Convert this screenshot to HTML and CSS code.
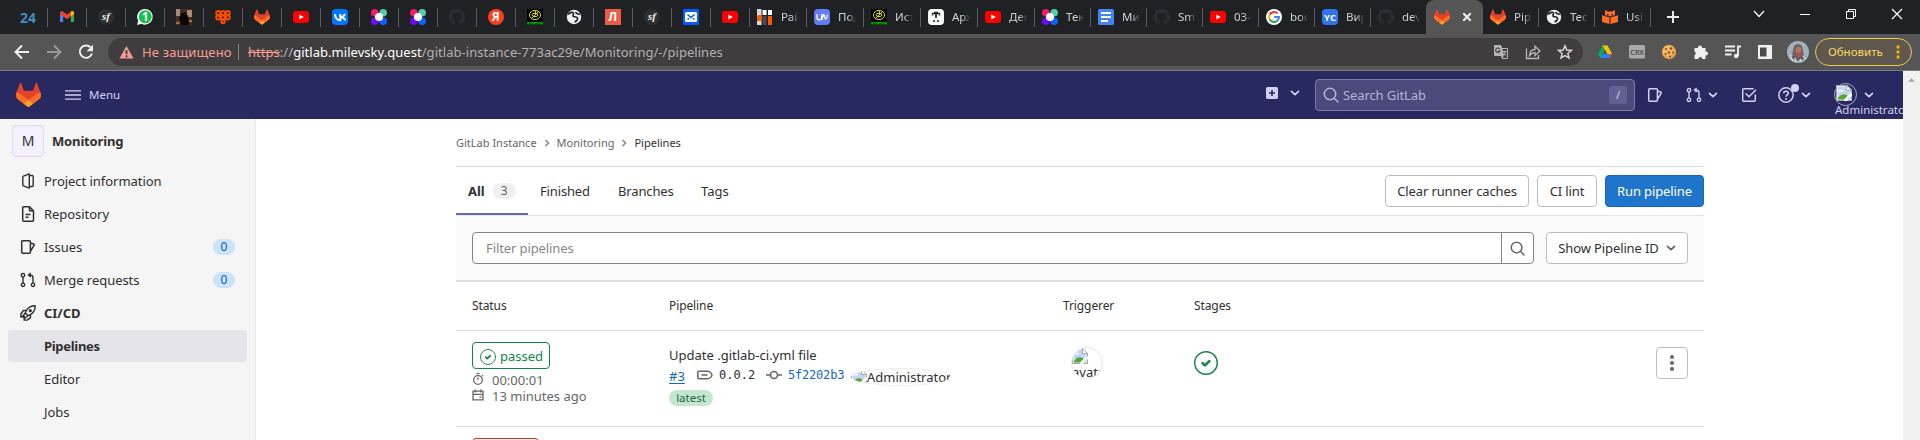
FILE: index.html
```html
<!DOCTYPE html>
<html lang="en">
<head>
<meta charset="utf-8">
<title>Pipelines · Monitoring · GitLab</title>
<link rel="stylesheet" href="styles.css">
</head>
<body>
<svg class="defs" width="0" height="0">
  <symbol id="fox" viewBox="0 0 25 24"><path fill="#e24329" d="m24.507 9.5-.034-.09L21.082.562a.896.896 0 0 0-1.694.091l-2.29 7.01H7.825L5.535.653a.898.898 0 0 0-1.694-.09L.451 9.411.416 9.5a6.297 6.297 0 0 0 2.09 7.278l5.202 3.899 4.114 3.111a1.051 1.051 0 0 0 1.268 0l4.115-3.111 5.211-3.9A6.297 6.297 0 0 0 24.507 9.5Z"/><path fill="#fc6d26" d="m24.507 9.5-.034-.09a11.44 11.44 0 0 0-4.56 2.051l-7.447 5.632 4.742 3.584 5.211-3.9A6.297 6.297 0 0 0 24.507 9.5ZM5.01 11.461a11.43 11.43 0 0 0-4.56-2.05L.416 9.5a6.297 6.297 0 0 0 2.09 7.278l5.202 3.899 4.745-3.584Z"/><path fill="#fca326" d="m7.707 20.677 4.115 3.111a1.051 1.051 0 0 0 1.268 0l4.115-3.111-4.743-3.584Z"/></symbol>
  <symbol id="yt" viewBox="0 0 16 16"><rect y="2" width="16" height="12" rx="3" fill="#f00"/><path d="M6.3 5.4v5.2L10.8 8z" fill="#fff"/></symbol>
  <symbol id="dots" viewBox="0 0 16 16"><circle cx="3.8" cy="3.8" r="3.8" fill="#ef1e6b"/><circle cx="12.2" cy="3.8" r="3.8" fill="#4cd0a4"/><circle cx="3.8" cy="12.2" r="3.8" fill="#6a0cf5"/><circle cx="12.2" cy="12.2" r="3.8" fill="#0a63ff"/><circle cx="8" cy="8" r="4" fill="#fff"/></symbol>
  <symbol id="github" viewBox="0 0 16 16"><path fill="#292f33" d="M8 0C3.58 0 0 3.58 0 8c0 3.54 2.29 6.53 5.47 7.59.4.07.55-.17.55-.38v-1.49c-2.01.37-2.53-.49-2.69-.94-.09-.23-.48-.94-.82-1.13-.28-.15-.68-.52-.01-.53.63-.01 1.08.58 1.23.82.72 1.21 1.87.87 2.33.66.07-.52.28-.87.51-1.07-1.78-.2-3.64-.89-3.64-3.95 0-.87.31-1.59.82-2.15-.08-.2-.36-1.02.08-2.12 0 0 .67-.21 2.2.82a7.6 7.6 0 0 1 4 0c1.53-1.04 2.2-.82 2.2-.82.44 1.1.16 1.92.08 2.12.51.56.82 1.27.82 2.15 0 3.07-1.87 3.75-3.65 3.95.29.25.54.73.54 1.48v2.2c0 .21.15.46.55.38A8.01 8.01 0 0 0 8 0Z"/></symbol>
  <symbol id="sf" viewBox="0 0 16 16" overflow="visible"><circle cx="8" cy="8" r="8" fill="#2f2f31"/><text x="8" y="11.2" text-anchor="middle" font-family="Liberation Serif, serif" font-style="italic" font-weight="bold" font-size="11" fill="#eee">sf</text></symbol>
  <symbol id="globe" viewBox="0 0 16 16"><circle cx="8" cy="8" r="7.2" fill="#f1f1f1"/><path d="M2 5.500c2.500-2.500 5-2.800 5.500-1.300.3 1.300-1 1.600-.5 2.800.6 1.100 3.500.3 4.500 2 .7 1.500-1.500 3.500-3 4M9.500 3.200c.8 1.600 2 2 4.500 2" fill="none" stroke="#202124" stroke-width="1.600"/></symbol>
  <symbol id="atom" viewBox="0 0 16 16"><path d="M0 0h16v16H0z" fill="#000"/><g fill="none" stroke="#d9dc1a"><ellipse cx="8" cy="6" rx="5.5" ry="4.6"/><ellipse cx="8" cy="6" rx="3" ry="1.6"/><path d="m4 10 8-8M8 1.500l1 4"/></g><path d="M0 13h16v2.600H0z" fill="#009a00"/><path d="M2 15h3m3 0h5" stroke="#003a00"/></symbol>
  <symbol id="chev" viewBox="0 0 10 10"><path d="M1.500 3.300 5 6.700l3.500-3.400" fill="none" stroke="currentColor" stroke-width="1.700" stroke-linecap="round" stroke-linejoin="round"/></symbol>
  <symbol id="issues" viewBox="0 0 16 16"><path d="M2.600 1.750h6.800a1 1 0 0 1 1 1v10.500a1 1 0 0 1-1 1H2.600a.9.900 0 0 1-.9-.9V2.600a.9.900 0 0 1 .9-.850ZM10.400 4l3.300 1a.8.800 0 0 1 .5 1.100l-3.800 6.300" fill="none" stroke="currentColor" stroke-width="1.500" stroke-linejoin="round"/></symbol>
  <symbol id="merge" viewBox="0 0 16 16"><g fill="none" stroke="currentColor" stroke-width="1.400"><circle cx="3" cy="3.200" r="1.700"/><circle cx="3" cy="12.800" r="1.700"/><circle cx="13" cy="12.800" r="1.700"/><path d="M3 5v6M13 11V6a3 3 0 0 0-3-3H8.500M10.700.900 8.500 3l2.200 2.100" /></g></symbol>
  <symbol id="search" viewBox="0 0 16 16"><path d="M11.300 11.300 15 15M12.700 7A5.700 5.700 0 1 1 1.300 7a5.700 5.700 0 0 1 11.400 0Z" fill="none" stroke="currentColor" stroke-width="1.600" stroke-linecap="round"/></symbol>
  <symbol id="broken" viewBox="0 0 16 16"><path d="M0 0h11l5 5v11H0z" fill="#fff"/><path d="M1.500 1.500h9V6H14.500v8.500h-13z" fill="#c3d5f7"/><path d="M2 6.500c0-1.500 2-1.600 2.300-.9C5 4 7.500 4.800 7.200 6.500z" fill="#fff"/><path d="M1.500 14.500c1-3.500 4-5.300 6.500-5.300 2 0 3.500 1 4.200 2.300l-4 3z" fill="#52a833"/><path d="m9.200 14.600 5.500-5" stroke="#fff" stroke-width="2"/><path d="M.5 15.500V.500h10.300l4.700 4.800v3M10.500.500v5h5M15.500 11.500v4h-4M.5 15.500h7.500" fill="none" stroke="#a2a4a6"/></symbol>
  <symbol id="passed" viewBox="0 0 24 24"><circle cx="12" cy="12" r="11.300" fill="none" stroke="currentColor" stroke-width="1.400"/><path d="m8.600 12.200 2.300 2.200 4.500-4.300" fill="none" stroke="currentColor" stroke-width="2.600" stroke-linecap="round" stroke-linejoin="round"/></symbol>
</svg>

<header class="tabstrip">
  <div class="pin"><svg viewBox="0 0 16 16"><text x="8" y="13.600" text-anchor="middle" font-family="Open Sans, sans-serif" font-weight="bold" font-size="14" fill="#3f8fc5">24</text></svg></div>
  <div class="pin"><svg viewBox="0 0 16 16"><path d="M1 3.500v9.500h3.200V7z" fill="#4285f4"/><path d="M15 3.500v9.500h-3.200V7z" fill="#34a853"/><path d="M1 5V3.600C1 2 2.700 1.600 3.800 2.400L8 5.600l4.200-3.200C13.300 1.600 15 2 15 3.600V5L8 10.200z" fill="#ea4335"/><path d="M11.800 2.700 13 2.200c1.200 0 2 .6 2 1.800v1l-3.200 2.400z" fill="#fbbc04"/></svg></div>
  <div class="pin"><svg><use href="#sf"/></svg></div>
  <div class="pin"><svg viewBox="0 0 16 16"><path d="M8.200 0A7.800 7.800 0 1 1 4.500 14.800L0 16l1.300-4.200A7.800 7.800 0 0 1 8.200 0Z" fill="#fff"/><circle cx="8.200" cy="7.800" r="6.500" fill="#16c04c"/><text x="8.200" y="12" text-anchor="middle" font-family="Open Sans, sans-serif" font-weight="bold" font-size="11.500" fill="#fff">1</text></svg></div>
  <div class="pin"><svg viewBox="0 0 16 16"><path d="M0 0h16v16H0z" fill="#4a2d20"/><path d="M0 0h4v7H0z" fill="#a58a80"/><path d="M11 1h5v7h-5z" fill="#b08a6c"/><path d="M5 16 3 9l3-5 3-1 3 4 1 9z" fill="#090707"/><path d="M0 13h4l-1 2H0zM13 11h3v2h-3z" fill="#b06e3d"/></svg></div>
  <div class="pin"><svg viewBox="0 0 16 16"><g fill="none" stroke="#fc4c02" stroke-width="2"><circle cx="3.200" cy="4" r="2"/><circle cx="8" cy="4" r="2"/><circle cx="12.800" cy="4" r="2"/><circle cx="3.200" cy="8.500" r="2"/><circle cx="8" cy="8.500" r="2"/><circle cx="12.800" cy="8.500" r="2"/><circle cx="8" cy="12.500" r="1.800"/></g></svg></div>
  <div class="pin"><svg><use href="#fox"/></svg></div>
  <div class="pin"><svg><use href="#yt"/></svg></div>
  <div class="pin"><svg viewBox="0 0 16 16"><rect width="16" height="16" rx="4" fill="#07f"/><path d="M3 5c.2 4 2 6.200 5.300 6.200V5M13 5c-.6 1.700-2 2.900-4.500 3.100 2.500.2 4 1.300 4.800 3.200" fill="none" stroke="#fff" stroke-width="1.900"/></svg></div>
  <div class="pin"><svg><use href="#dots"/></svg></div>
  <div class="pin"><svg><use href="#dots"/></svg></div>
  <div class="pin"><svg><use href="#github"/></svg></div>
  <div class="pin"><svg viewBox="0 0 16 16"><circle cx="8" cy="8" r="8" fill="#fc3f1d"/><text x="7.800" y="12.200" text-anchor="middle" font-family="Open Sans, sans-serif" font-weight="bold" font-size="12" fill="#fff">Я</text></svg></div>
  <div class="pin"><svg><use href="#atom"/></svg></div>
  <div class="pin"><svg><use href="#globe"/></svg></div>
  <div class="pin"><svg viewBox="0 0 16 16"><path d="M0 0h16v16H0z" fill="#ef5a42"/><text x="7.800" y="12.400" text-anchor="middle" font-family="Open Sans, sans-serif" font-weight="bold" font-size="12" fill="#fff">Л</text></svg></div>
  <div class="pin"><svg><use href="#sf"/></svg></div>
  <div class="pin"><svg viewBox="0 0 16 16"><rect width="16" height="16" rx="1.500" fill="#005ff9"/><rect x="2" y="3" width="12" height="10" rx="1.500" fill="#fff"/><path d="m4.500 5.500 3.500 3 3.500-3M4.500 10.500l1.500-1.200M11.500 10.500 10 9.300" fill="none" stroke="#005ff9" stroke-width="1.500"/></svg></div>
  <div class="pin"><svg><use href="#yt"/></svg></div>
  <div class="tab"><svg viewBox="0 0 16 16"><path d="M0 0h4.500v16H0z" fill="#d8d8d8"/><path d="M1 6h3.500v6H0V8z" fill="#fc5a00"/><path d="M5.500 1h4v5h-4zM11 1h4v5h-4z" fill="#fff"/><path d="M5.500 7h4v9h-4z" fill="#4a4b50"/><path d="M11 7h4v9h-4z" fill="#fc5a00"/></svg><span>Рай</span></div>
  <div class="tab"><svg viewBox="0 0 16 16"><rect width="16" height="16" rx="4" fill="#5f7df5"/><path d="M3 5v3.500a2.300 2.300 0 0 0 4.600 0V5M7.600 11l2-5.500c1 0 1 4.500 2 4.500s1.500-2 1.700-4.500" fill="none" stroke="#fff" stroke-width="1.300"/></svg><span>Под</span></div>
  <div class="tab"><svg><use href="#atom"/></svg><span>Ист</span></div>
  <div class="tab"><svg viewBox="0 0 16 16"><rect width="16" height="16" rx="4" fill="#fff"/><path d="M4 4.500h8M6 3.500h4M8 5v4M4.500 5.500v1M11.500 5.500v1M5 12h2M9 12h2" stroke="#222" stroke-width="1.700"/></svg><span>Арх</span></div>
  <div class="tab"><svg><use href="#yt"/></svg><span>Дем</span></div>
  <div class="tab n"><svg><use href="#dots"/></svg><span>Тек</span></div>
  <div class="tab n"><svg viewBox="0 0 16 16"><rect width="16" height="16" rx="1.500" fill="#4285f4"/><path d="M3 4h10M3 8h10M3 12h7" stroke="#fff" stroke-width="1.900"/></svg><span>Ми</span></div>
  <div class="tab n"><svg><use href="#github"/></svg><span>Sm</span></div>
  <div class="tab n"><svg><use href="#yt"/></svg><span>03-</span></div>
  <div class="tab n"><svg viewBox="0 0 16 16"><circle cx="8" cy="8" r="8" fill="#fff"/><g fill="none" stroke-width="2.100"><path d="M11.600 4.600A5 5 0 0 0 3.600 5.700" stroke="#ea4335"/><path d="M3.600 5.700a5 5 0 0 0 0 4.600" stroke="#fbbc05"/><path d="M3.600 10.300a5 5 0 0 0 7.700 1.400" stroke="#34a853"/><path d="M11.300 11.700A4.900 4.900 0 0 0 13 8H8" stroke="#4285f4"/></g></svg><span>boo</span></div>
  <div class="tab n"><svg viewBox="0 0 16 16"><rect width="16" height="16" rx="4" fill="#3072f0"/><text x="8" y="11.500" text-anchor="middle" font-family="Open Sans, sans-serif" font-weight="bold" font-size="9.500" fill="#fff">YC</text></svg><span>Вир</span></div>
  <div class="tab last"><svg><use href="#github"/></svg><span>dev</span></div>
  <div class="tab active"><svg><use href="#fox"/></svg><svg class="close" viewBox="0 0 16 16"><path d="m4.300 4.300 7.400 7.400M11.700 4.300l-7.400 7.400" stroke="#f1f1f1" stroke-width="2"/></svg></div>
  <div class="tab n"><svg><use href="#fox"/></svg><span>Pip</span></div>
  <div class="tab n"><svg><use href="#globe"/></svg><span>Tec</span></div>
  <div class="tab n"><svg viewBox="0 0 16 16"><path d="m3 1 3 1.500h4L13 1v7H3z" fill="#fc6d26"/><path d="M0 6l7.500 2v7L0 13zM16 6 8.500 8v7l7.500-2z" fill="#fc6d26"/><path d="M5 5h1.500v1.500H5zM9.500 5H11v1.500H9.500z" fill="#202124"/><path d="M1 6.200 8 8l7-1.800" fill="none" stroke="#202124"/></svg><span>Usi</span></div>
  <svg class="newtab" viewBox="0 0 12 12"><path d="M6 0v12M0 6h12" stroke="#e8eaed" stroke-width="2"/></svg>
  <div class="winctl">
    <svg viewBox="0 0 12 12"><path d="m1 3 5 5.500L11 3" fill="none" stroke="#fff" stroke-width="1.200"/></svg>
    <svg viewBox="0 0 12 12"><path d="M1 6.500h10" stroke="#fff"/></svg>
    <svg viewBox="0 0 12 12"><path d="M1.500 3.500h7v7h-7zM3.500 3.500v-2h7v7h-2" fill="none" stroke="#fff"/></svg>
    <svg viewBox="0 0 12 12"><path d="m1 1 10 10M11 1 1 11" stroke="#fff" stroke-width="1.200"/></svg>
  </div>
</header>

<div class="toolbar">
  <svg class="navi" viewBox="0 0 16 16"><path d="M15 8H2M8 1.500 1.500 8 8 14.500" fill="none" stroke="#f1f1f1" stroke-width="1.900"/></svg>
  <svg class="navi" viewBox="0 0 16 16"><path d="M1 8h13M8 1.500 14.500 8 8 14.500" fill="none" stroke="#999" stroke-width="1.900"/></svg>
  <svg class="navi" viewBox="0 0 16 16"><path d="M12.600 3.400A6.200 6.200 0 1 0 14 9.500" fill="none" stroke="#f1f1f1" stroke-width="1.900"/><path d="M15 .8v6.400H8.600z" fill="#f1f1f1"/></svg>
  <div class="address">
    <svg class="warn" viewBox="0 0 16 14"><path d="M8 .5 15.500 14H.5z" fill="#f69d93"/><path d="M8 5v4M8 10.500v2" stroke="#3c3838" stroke-width="2"/></svg>
    <span class="unsafe">Не защищено</span>
    <span class="url"><s>https</s>://<b>gitlab.milevsky.quest</b>/gitlab-instance-773ac29e/Monitoring/-/pipelines</span>
    <div class="addr-icons">
      <svg viewBox="0 0 16 16"><path d="M1 1h7l1.200 3H14a1 1 0 0 1 1 1v9a1 1 0 0 1-1 1H9l-1-3H2a1 1 0 0 1-1-1z" fill="#b3b3b3"/><path d="M9.600 5H14v9H9.700l1-2z" fill="#403d3f"/><path d="M6.800 5A2.200 2.200 0 1 0 7 7H5" fill="none" stroke="#403d3f" stroke-width="1.100"/><path d="M9.500 7.500h4M12.500 7.500c-.4 2-1.500 3.300-3 4M10.500 9c.5 1 1.400 2 2.700 2.800" fill="none" stroke="#c3c3c3"/></svg>
      <svg viewBox="0 0 16 16"><path d="M1.500 4.500v10h12V11" fill="none" stroke="#b9b9b9" stroke-width="1.300"/><path d="M4.500 11.500c.3-4 2.300-6 5.500-6V2.300L15 7l-5 4.500V8.700c-2.300 0-4 .8-5.500 2.800Z" fill="none" stroke="#b9b9b9" stroke-width="1.300"/></svg>
      <svg viewBox="0 0 16 16"><path d="m8 1.800 1.800 4.200 4.600.4-3.500 3 1.100 4.500-4-2.400-4 2.400 1.100-4.500-3.500-3L6.200 6z" fill="none" stroke="#d5d5d5" stroke-width="1.500"/></svg>
    </div>
  </div>
  <div class="ext">
    <svg viewBox="0 0 16 16"><path d="M5.500 1.500h5L8 6 3.300 14 1 10z" fill="#0da960"/><path d="M5.500 1.500h5L15 10h-4.800z" fill="#ffc107"/><path d="M5.700 10H15l-2.300 4H3.300z" fill="#2684fc"/><path d="M12.500 10H15l-2.300 4z" fill="#ea4335"/><path d="M8 5.800 10.300 10H5.700z" fill="#555"/></svg>
    <svg viewBox="0 0 16 16"><rect y="1" width="16" height="13.500" rx="1.500" fill="#aaa"/><text x="8" y="10.600" text-anchor="middle" font-family="Open Sans, sans-serif" font-size="7.300" fill="#444" stroke="#444" stroke-width=".2">CRX</text></svg>
    <svg viewBox="0 0 16 16"><circle cx="8" cy="8" r="7.200" fill="#e8a04c"/><circle cx="7" cy="7" r="5.500" fill="#f2b866"/><g fill="#8a4a1c"><circle cx="5" cy="5" r="1.100"/><circle cx="10" cy="4.500" r="1.200"/><circle cx="8" cy="8.500" r="1.200"/><circle cx="12" cy="8.500" r="1"/><circle cx="4.500" cy="10" r="1"/><circle cx="9" cy="12.500" r="1"/></g></svg>
    <svg viewBox="0 0 16 16"><path d="M5 3.500a2 2 0 1 1 4 0V4h3.500v3.500H13a2 2 0 1 1 0 4h-.5V15H9.300a2 2 0 0 0-4 0H1.500v-3.800a2 2 0 0 0 0-3.700V4H5z" fill="#f1f1f1"/></svg>
    <svg viewBox="0 0 16 16"><path d="M0 2.500h10M0 6.500h10M0 10.500h6.500M13 12V2.500h3" fill="none" stroke="#f1f1f1" stroke-width="1.800"/><circle cx="11.200" cy="12" r="2.300" fill="#f1f1f1"/></svg>
    <svg viewBox="0 0 16 16"><path d="M1 1h14v14H1z" fill="#f1f1f1"/><path d="M3 3.500h6.500v9H3z" fill="#4b4b4b"/></svg>
    <svg class="me" viewBox="0 0 22 22"><circle cx="11" cy="11" r="11" fill="#a3afb9"/><path d="M3 16c3-3 13-3 16 0a11 11 0 0 1-16 0Z" fill="#555d69"/><path d="M7 5Q11 1 15 5l2 9H5z" fill="#6d6264"/><circle cx="11.500" cy="9" r="3" fill="#b3745f"/><path d="M8 12.500h7l-1.500 4h-4z" fill="#b24f49"/><path d="m3 14 3 6M8 17l1 4M16 15l3 3M13 18l1 3" stroke="#ddd" stroke-width="1.500"/></svg>
  </div>
  <div class="update"><span>Обновить</span><svg viewBox="0 0 4 14"><g fill="#f9ab00"><circle cx="2" cy="2" r="1.700"/><circle cx="2" cy="7" r="1.700"/><circle cx="2" cy="12" r="1.700"/></g></svg></div>
</div>

<div class="viewport">
<div class="page">
  <nav class="navbar">
    <svg class="logo"><use href="#fox"/></svg>
    <svg class="burger" viewBox="0 0 16 10"><path d="M0 .8h16M0 5h16M0 9.200h16" stroke="currentColor" stroke-width="1.300"/></svg>
    <span class="menu">Menu</span>
    <svg class="plus" viewBox="0 0 12 12"><rect width="12" height="12" rx="1.500" fill="currentColor"/><path d="M6 3v6M3 6h6" stroke="#292961" stroke-width="1.600"/></svg>
    <svg class="chev c1"><use href="#chev"/></svg>
    <div class="search"><svg><use href="#search"/></svg><span>Search GitLab</span><kbd>/</kbd></div>
    <svg class="i16 n1"><use href="#issues"/></svg>
    <svg class="i16 n2"><use href="#merge"/></svg>
    <svg class="chev c2"><use href="#chev"/></svg>
    <svg class="i16 n3" viewBox="0 0 16 16"><path d="M14.300 8v5.300a1 1 0 0 1-1 1H2.700a1 1 0 0 1-1-1V2.700a1 1 0 0 1 1-1H12M5 6.700l3 3 6.500-6.500" fill="none" stroke="currentColor" stroke-width="1.500" stroke-linecap="round" stroke-linejoin="round"/></svg>
    <div class="help"><svg class="i16" viewBox="0 0 16 16"><circle cx="8" cy="8" r="7.200" fill="none" stroke="currentColor" stroke-width="1.500"/><path d="M5.700 6.300C5.700 3.500 10.300 3.500 10.300 6.300 10.300 8 8 7.900 8 9.800" fill="none" stroke="currentColor" stroke-width="1.500"/><circle cx="8" cy="11.900" r="1" fill="currentColor"/></svg><i></i></div>
    <svg class="chev c3"><use href="#chev"/></svg>
    <div class="user"><div class="ring"><svg class="i16"><use href="#broken"/></svg></div><span>Administrator</span></div>
    <svg class="chev c4"><use href="#chev"/></svg>
  </nav>
  <div class="body">
    <aside class="side">
      <div class="project"><span class="letter">M</span><strong>Monitoring</strong></div>
      <a class="item"><svg viewBox="0 0 16 16"><path d="M9.300.9v14.200l-5.900-2.200a.9.900 0 0 1-.6-.9V4a.9.900 0 0 1 .6-.9zM9.300 2.500h2.900a1 1 0 0 1 1 1v9a1 1 0 0 1-1 1H9.300" fill="none" stroke="currentColor" stroke-width="1.400" stroke-linejoin="round"/></svg><span>Project information</span></a>
      <a class="item"><svg viewBox="0 0 16 16"><path d="M3.700.8h5.800l4 4v9.400a1 1 0 0 1-1 1H3.700a1 1 0 0 1-1-1V1.800a1 1 0 0 1 1-1ZM9.500.8v4h4M5.500 8.500h5M5.500 11.300h3" fill="none" stroke="currentColor" stroke-width="1.500" stroke-linejoin="round"/></svg><span>Repository</span></a>
      <a class="item"><svg><use href="#issues"/></svg><span>Issues</span><em>0</em></a>
      <a class="item"><svg><use href="#merge"/></svg><span>Merge requests</span><em>0</em></a>
      <a class="item bold"><svg viewBox="0 0 16 16"><path d="M15.200.8c-4.500 0-7.300 1.700-9.200 5.400l-.7 1.800 2.700 2.700 1.800-.7c3.700-1.900 5.400-4.700 5.400-9.200ZM6 5.500H3.300L.9 9v3.200l2.300-1 1 .3M10.500 10v2.700L7 15.100H4l.8-2.300-.8-2M5.300 8 2.500 11.500 4.500 13.500 8 10.700" fill="none" stroke="currentColor" stroke-width="1.400" stroke-linejoin="round"/><circle cx="10.300" cy="5.700" r="1.600" fill="currentColor"/></svg><span>CI/CD</span></a>
      <a class="item sub on">Pipelines</a>
      <a class="item sub">Editor</a>
      <a class="item sub">Jobs</a>
    </aside>
    <main class="main">
      <div class="crumbs"><span>GitLab Instance</span><svg viewBox="0 0 8 8"><path d="m2.500 1 3 3-3 3" fill="none" stroke="currentColor" stroke-width="1.500"/></svg><span>Monitoring</span><svg viewBox="0 0 8 8"><path d="m2.500 1 3 3-3 3" fill="none" stroke="currentColor" stroke-width="1.500"/></svg><span class="here">Pipelines</span></div>
      <div class="tabs">
        <div class="t on">All <em>3</em></div><div class="t t2">Finished</div><div class="t t3">Branches</div><div class="t t4">Tags</div>
        <div class="btns"><button class="b b1">Clear runner caches</button><button class="b b2">CI lint</button><button class="b b3">Run pipeline</button></div>
      </div>
      <div class="filter">
        <div class="field"><span>Filter pipelines</span><div class="go"><svg><use href="#search"/></svg></div></div>
        <button class="b drop"><span>Show Pipeline ID</span><svg class="chev"><use href="#chev"/></svg></button>
      </div>
      <div class="grid head"><span>Status</span><span>Pipeline</span><span>Triggerer</span><span>Stages</span></div>
      <div class="grid row">
        <div>
          <div class="badge"><svg><use href="#passed"/></svg>passed</div>
          <div class="meta"><svg viewBox="0 0 12 12"><circle cx="6" cy="7" r="4.300" fill="none" stroke="currentColor" stroke-width="1.300"/><path d="M6 4.500V7M4.500.7h3M10 2.200l1 1" stroke="currentColor" stroke-width="1.300"/></svg><span>00:00:01</span></div>
          <div class="meta"><svg viewBox="0 0 12 12"><path d="M1 2.200h10v8.600H1zM1 5.300h10M3.300.4v3M8.700.4v3" fill="none" stroke="currentColor" stroke-width="1.300"/><path d="M7.500 8h2" stroke="currentColor" stroke-width="1.300"/></svg><span>13 minutes ago</span></div>
        </div>
        <div>
          <div class="title">Update .gitlab-ci.yml file</div>
          <div class="refs">
            <a class="num">#3</a>
            <svg class="tagi" viewBox="0 0 16 16"><path d="M1.800 4.300h8.700c2 0 4 2.200 4.500 3.700-.5 1.500-2.500 3.700-4.500 3.700H1.800a1 1 0 0 1-1-1V5.300a1 1 0 0 1 1-1ZM4.500 8h6" fill="none" stroke="currentColor" stroke-width="1.500"/></svg>
            <code class="tagn">0.0.2</code>
            <svg class="comi" viewBox="0 0 16 16"><path d="M0 8h4.500M11.500 8H16" stroke="currentColor" stroke-width="1.600"/><circle cx="8" cy="8" r="3.500" fill="none" stroke="currentColor" stroke-width="1.600"/></svg>
            <code class="sha">5f2202b3</code>
            <div class="oval"><svg class="i16"><use href="#broken"/></svg><span>Administrator</span></div>
          </div>
          <span class="latest">latest</span>
        </div>
        <div><div class="avatar"><svg class="i16"><use href="#broken"/></svg><span>avatar</span></div></div>
        <div><svg class="stage"><use href="#passed"/></svg></div>
        <button class="b kebab"><svg viewBox="0 0 4 16"><g fill="#666"><circle cx="2" cy="2" r="2"/><circle cx="2" cy="8" r="2"/><circle cx="2" cy="14" r="2"/></g></svg></button>
      </div>
      <div class="grid next"><div class="badge red"></div></div>
    </main>
  </div>
</div>
<div class="scroll"><svg viewBox="0 0 8 4"><path d="M4 0 8 4H0z" fill="#a3a3a3"/></svg></div>
</div>
</body>
</html>
```
FILE: styles.css
```css
* { box-sizing: border-box; }
body { margin: 0; width: 1920px; height: 440px; overflow: hidden; background: #fff; font: 13px/16px "Noto Sans", "Open Sans", sans-serif; color: #303030; }
svg { display: block; flex: none; }
.defs { position: absolute; }
.i16 { width: 16px; height: 16px; }
.chev { width: 10px; height: 10px; }

/* browser tabs */
.tabstrip { display: flex; height: 34px; padding-left: 9px; background: #202124; }
.pin, .tab { display: flex; flex: none; height: 34px; padding-top: 9px; background: linear-gradient(#5b5c5f, #5b5c5f) right 8px / 1px 19px no-repeat; }
.pin { width: 39px; padding-left: 11px; }
.tab { width: 57px; padding-left: 7px; color: #cfd1d4; }
.tab.n { width: 56px; }
.tab.last, .tab.active { background-image: none; }
.pin svg, .tab svg { width: 16px; height: 16px; overflow: visible; }
.tab span { width: 18px; margin-left: 8px; overflow: hidden; white-space: nowrap; font-size: 11.5px; -webkit-mask-image: linear-gradient(90deg, #000 55%, transparent); mask-image: linear-gradient(90deg, #000 55%, transparent); }
.tab.last { width: 55px; }
.tab.active { width: 57px; padding-left: 8px; background: #555; border-radius: 8px 8px 0 0; }
.tab.active .close { margin-left: 9px; }
.newtab { width: 12px; height: 12px; margin: 11px 0 0 16px; }
.winctl { display: flex; gap: 34px; margin: 8px 0 0 74px; }
.winctl svg { width: 12px; height: 12px; }

/* browser toolbar */
.toolbar { display: flex; align-items: center; height: 37px; padding: 0 8px 1px 14px; background: #555; border-bottom: 1px solid #7b7b78; }
.navi { width: 16px; height: 16px; margin-right: 16px; }
.address { display: flex; align-items: center; width: 1475px; height: 28px; margin-left: -2px; padding-left: 11px; border-radius: 14px; background: #403d3f; color: #b3b1b2; font-size: 13px; }
.warn { width: 15px; height: 14px; }
.unsafe { width: 97px; margin-left: 8px; padding-right: 8px; border-right: 1px solid #8b8788; color: #f69d93; white-space: nowrap; letter-spacing: .15px; }
.url { margin-left: 9px; letter-spacing: .04px; white-space: nowrap; }
.url s { color: #f69d93; }
.url b { color: #fff; font-weight: 400; }
.addr-icons { display: flex; gap: 16px; margin: 0 10px 0 auto; }
.addr-icons svg { width: 16px; height: 16px; }
.ext { display: flex; align-items: center; gap: 16px; margin-left: 14px; }
.ext svg { width: 16px; height: 16px; overflow: visible; }
.ext .me { width: 22px; height: 22px; margin-left: -2px; }
.update { display: flex; align-items: center; justify-content: space-between; width: 97px; height: 28px; margin-left: auto; padding: 0 11px 0 12px; border: 1px solid #f0c64f; border-radius: 14px; background: #5f584f; color: #fdd663; font-size: 11.5px; }
.update svg { width: 4px; height: 14px; }

/* page */
.viewport { display: flex; height: 369px; }
.page { width: 1903px; overflow: hidden; }
.scroll { width: 17px; padding: 7px 0 0 5px; background: #f1f1f1; }
.scroll svg { width: 7px; height: 4px; }
.navbar { display: flex; align-items: center; height: 48px; padding-left: 16px; background: #292961; color: #d1d1f0; font-size: 11.5px; }
.logo { width: 25px; height: 24px; }
.burger { width: 16px; height: 10px; margin-left: 24px; }
.menu { width: 40px; margin-left: 8px; }
.plus { width: 12px; height: 12px; margin: -4px 0 0 1137px; }
.c1 { margin: -4px 0 0 12px; }
.search { display: flex; align-items: center; width: 320px; height: 32px; margin-left: 15px; padding: 0 7px; border: 1px solid #7b7ba8; border-radius: 4px; background: #4b4a7c; color: #b3b3d3; font-size: 13px; }
.search svg { width: 16px; height: 16px; }
.search span { margin-left: 4px; letter-spacing: -.1px; }
.search kbd { width: 18px; height: 18px; margin-left: auto; border-radius: 3px; background: #626197; color: #d1d1f0; font: 11px/18px "Noto Sans", sans-serif; text-align: center; }
.n1 { margin-left: 12px; }
.n2 { margin-left: 23px; }
.c2 { margin-left: 6px; }
.n3 { margin-left: 23px; }
.help { position: relative; margin-left: 21px; }
.help i { position: absolute; left: 13px; top: -3px; width: 8px; height: 8px; border-radius: 50%; background: #d1d1f0; }
.c3 { margin-left: 7px; }
.user { position: relative; width: 23px; height: 24px; margin-left: 23px; }
.ring { width: 23px; height: 23px; padding: 1px 0 0 1px; border: 1px solid #a9a9d4; border-radius: 50%; }
.user span { position: absolute; left: 1px; top: 19px; }
.c4 { margin-left: 7px; }

.body { display: flex; height: 321px; }
.side { width: 256px; padding: 6px 8px; background: #f5f5f5; border-right: 1px solid #e8e8e8; }
.project { display: flex; align-items: center; height: 32px; margin: 0 0 8px 4px; }
.letter { width: 32px; height: 32px; margin-right: 8px; border: 1px solid #dfdbec; border-radius: 4px; background: #f4f0ff; line-height: 30px; text-align: center; font-size: 14px; }
.project strong, .bold, .on { font-weight: 700; }
.project strong { font-size: 13px; letter-spacing: -.15px; }
.item { display: flex; align-items: center; height: 32px; margin-bottom: 1px; padding: 0 12px; border-radius: 4px; letter-spacing: -.04px; }
.item svg { width: 16px; height: 16px; margin-right: 8px; }
.item em { width: 22px; height: 16px; margin-left: auto; border-radius: 8px; background: #cbe2f9; color: #0b5cad; font: 12px/16px "Noto Sans", sans-serif; text-align: center; }
.item.sub { padding-left: 36px; }
.item.on { background: #e5e4ea; letter-spacing: -.3px; }

.main { width: 1248px; margin-left: 200px; }
.crumbs { display: flex; align-items: center; height: 48px; border-bottom: 1px solid #dbdbdb; font-size: 11px; color: #666; }
.crumbs svg { width: 8px; height: 8px; margin: 0 6px; color: #888; }
.here { color: #303030; }
.tabs { display: flex; height: 49px; border-bottom: 1px solid #e7e7e7; }
.t { height: 48px; line-height: 48px; }
.t.on { display: flex; align-items: center; width: 72px; padding: 2px 0 0 12px; border-bottom: 2px solid #6666c4; line-height: 16px; }
.t em { width: 23px; height: 16px; margin: -1px 0 0 8px; border-radius: 8px; background: #f0f0f0; color: #666; font: 12px/16px "Noto Sans", sans-serif; text-align: center; }
.t2 { width: 78px; padding-left: 12px; letter-spacing: -.15px; }
.t3 { width: 83px; padding-left: 12px; letter-spacing: -.15px; }
.t4 { padding-left: 12px; }
.btns { display: flex; gap: 8px; margin: 8px 0 0 auto; }
.b { display: flex; align-items: center; justify-content: center; height: 32px; padding: 0; border: 1px solid #bfbfbf; border-radius: 4px; background: #fff; color: #303030; font: 13px/16px "Noto Sans", sans-serif; letter-spacing: -.12px; white-space: nowrap; }
.b1 { width: 144px; }
.b2 { width: 60px; }
.b3 { width: 99px; border-color: #1068bf; background: #1f75cb; color: #fff; }
.filter { display: flex; gap: 12px; height: 66px; padding: 16px 16px 0; background: #fafafa; border-bottom: 2px solid #dedede; }
.field { display: flex; align-items: center; flex: 1; height: 32px; padding-left: 13px; border: 1px solid #868686; border-radius: 4px; background: #fff; color: #868686; letter-spacing: -.1px; }
.go { width: 32px; height: 30px; margin-left: auto; padding: 8px 0 0 8px; border-left: 1px solid #868686; color: #666; }
.go svg { width: 15px; height: 15px; }
.drop { width: 142px; gap: 7px; }
.drop .chev { color: #666; }
.grid { display: grid; grid-template-columns: 197px 394px 131px 1fr 32px; padding: 0 16px; border-bottom: 1px solid #dbdbdb; }
.head { height: 49px; align-items: center; font-size: 12px; letter-spacing: -.1px; }
.row { height: 96px; padding-top: 11px; }
.badge { display: flex; align-items: center; gap: 4px; width: 78px; height: 27px; padding: 0 7px; border: 1px solid #108548; border-radius: 4px; color: #108548; font-size: 13px; line-height: 24px; }
.badge svg { width: 16px; height: 16px; margin-top: 3px; }
.meta { display: flex; align-items: center; height: 16px; color: #666; font-size: 13px; }
.badge + .meta { margin-top: 3px; }
.meta svg { width: 12px; height: 12px; margin: -2px 8px 0 0; }
.title { margin-top: 5px; }
.refs { display: flex; align-items: center; height: 18px; margin-top: 4px; }
.num { width: 16px; margin-top: -1px; color: #1068bf; text-decoration: underline; text-underline-offset: 2px; }
.refs > svg { width: 16px; height: 16px; color: #666; margin-top: -3px; }
.refs code { font: 12px/16px "DejaVu Sans Mono", monospace; margin-top: -2px; }
.refs .tagi { margin-left: 12px; }
.tagn { width: 47px; margin-left: 6px; }
.sha { width: 62px; margin-left: 6px; color: #1068bf; letter-spacing: -.2px; }
.oval { display: flex; width: 102px; height: 18px; border: 1px solid #ececec; border-radius: 50%; overflow: hidden; margin-top: 2px; }
.oval span { white-space: nowrap; line-height: 16px; }
.latest { display: block; width: 44px; height: 16px; margin-top: 5px; border-radius: 8px; background: #c3e6cd; color: #24663b; font-size: 11.5px; line-height: 16px; text-align: center; }
.avatar { width: 32px; height: 32px; margin: 5px 0 0 8px; border: 1px solid #e6e6e6; border-radius: 50%; overflow: hidden; line-height: 17px; }
.stage { width: 24px; height: 24px; margin-top: 9px; color: #108548; }
.kebab { margin-top: 5px; }
.kebab svg { width: 4px; height: 16px; }
.next { height: 40px; padding-top: 11px; }
.red { width: 67px; border-color: #dd2b0e; }
```
